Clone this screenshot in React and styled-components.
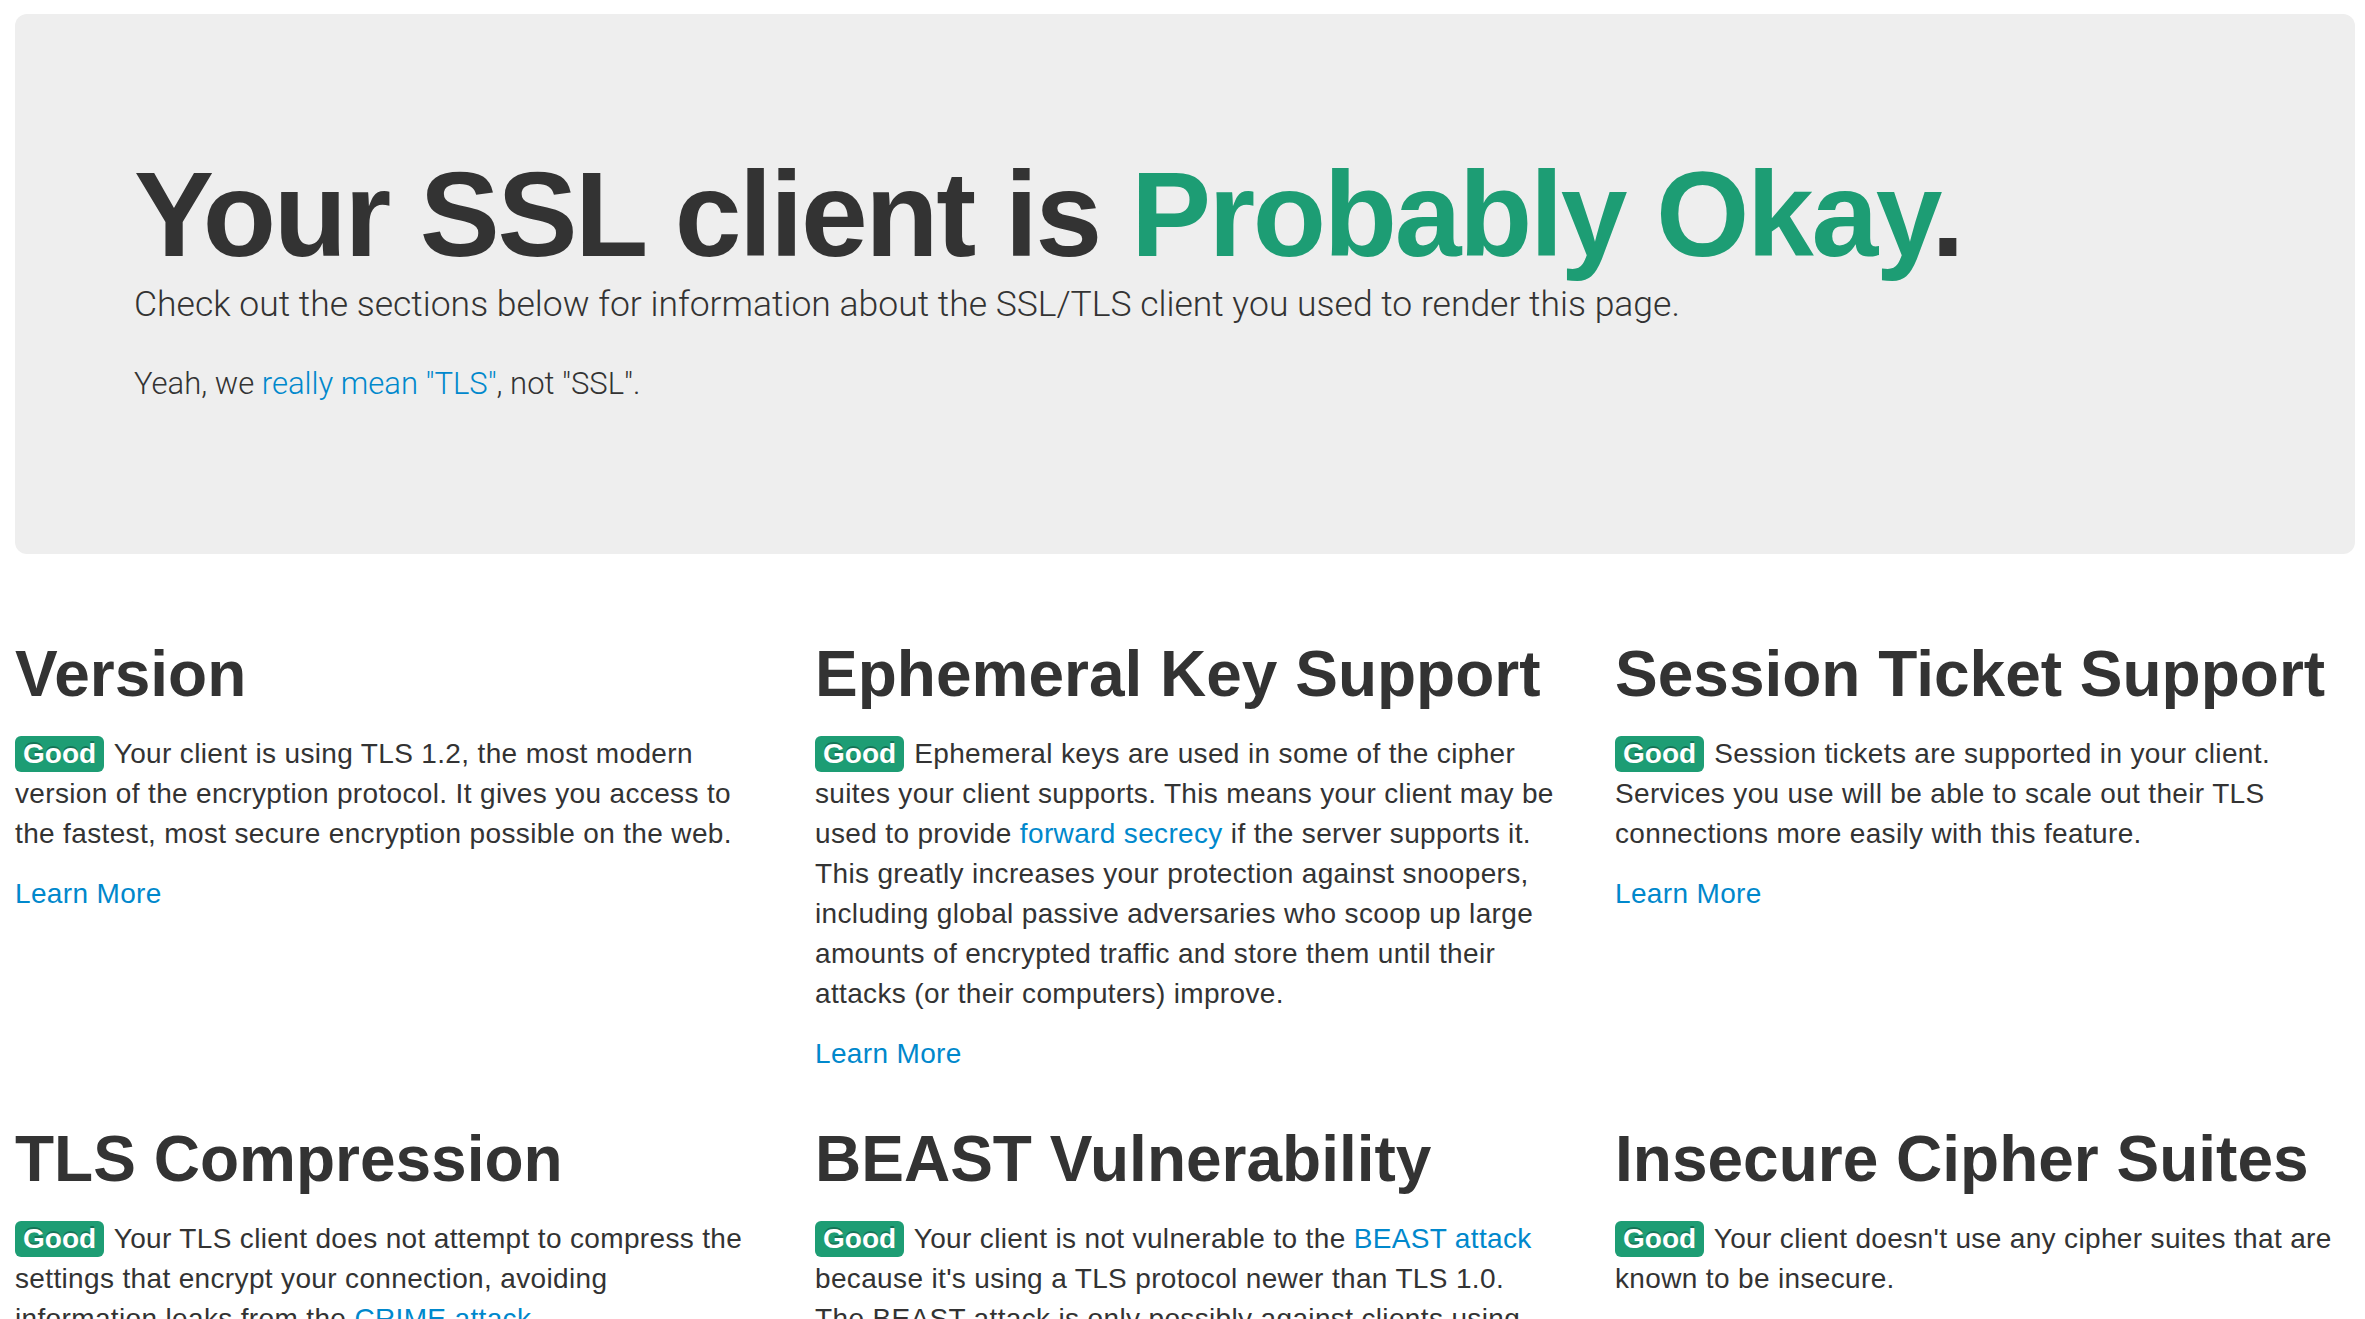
import React from 'react';
import styled, { createGlobalStyle } from 'styled-components';

const GlobalStyle = createGlobalStyle`
  html, body {
    margin: 0;
    padding: 0;
    background: #fff;
  }

  body {
    font-family: "Liberation Sans", Arial, sans-serif;
    font-size: 28px;
    line-height: 40px;
    letter-spacing: 0.35px;
    color: #333;
  }
`;

const Page = styled.div`
  padding: 14px 10px 0 15px;
`;

const Hero = styled.header`
  background-color: #eee;
  border-radius: 12px;
  padding: 120px 119px;
  margin-bottom: 60px;
`;

const Title = styled.h1`
  margin: 20px 0 0;
  font-size: 120px;
  line-height: 1;
  font-weight: bold;
  letter-spacing: -2.4px;
  color: #333;
`;

const Verdict = styled.span`
  color: #1d9d74;
`;

const Lead = styled.p`
  margin: 0 0 20px;
  font-family: Roboto, "Liberation Sans", sans-serif;
  font-weight: 300;
  font-size: ${props => props.small ? '31px' : '35.5px'};
  line-height: 60px;
  letter-spacing: 0;
  color: #333;
`;

const Link = styled.a`
  color: #0088cc;
  text-decoration: none;
`;

const Sections = styled.main`
  display: grid;
  grid-template-columns: repeat(3, 1fr);
  column-gap: 60px;
  row-gap: 5px;
`;

const Section = styled.section`
  min-width: 0;
`;

const SectionTitle = styled.h2`
  margin: 20px 0;
  font-size: 64px;
  line-height: 80px;
  font-weight: bold;
  letter-spacing: 0;
  color: #333;
`;

const Text = styled.p`
  margin: 0 0 20px;
`;

const Rating = styled.span`
  display: inline-block;
  padding: 4px 8px;
  margin-right: 2px;
  font-size: 28px;
  line-height: 28px;
  font-weight: bold;
  letter-spacing: 0;
  color: #fff;
  background-color: #1d9d74;
  border-radius: 6px;
  text-shadow: 0 -2px 0 rgba(0, 0, 0, 0.25);
  vertical-align: baseline;
`;

const sections = [
  {
    title: 'Version',
    body: <>Your client is using TLS 1.2, the most modern version of the encryption protocol. It gives you access to the fastest, most secure encryption possible on the web.</>,
  },
  {
    title: 'Ephemeral Key Support',
    body: <>Ephemeral keys are used in some of the cipher suites your client supports. This means your client may be used to provide <Link href="#">forward secrecy</Link> if the server supports it. This greatly increases your protection against snoopers, including global passive adversaries who scoop up large amounts of encrypted traffic and store them until their attacks (or their computers) improve.</>,
  },
  {
    title: 'Session Ticket Support',
    body: <>Session tickets are supported in your client. Services you use will be able to scale out their TLS connections more easily with this feature.</>,
  },
  {
    title: 'TLS Compression',
    body: <>Your TLS client does not attempt to compress the settings that encrypt your connection, avoiding information leaks from the <Link href="#">CRIME attack</Link>.</>,
  },
  {
    title: 'BEAST Vulnerability',
    body: <>Your client is not vulnerable to the <Link href="#">BEAST attack</Link> because it's using a TLS protocol newer than TLS 1.0. The BEAST attack is only possibly against clients using TLS 1.0 or earlier versions of TLS or SSL.</>,
  },
  {
    title: 'Insecure Cipher Suites',
    body: <>Your client doesn't use any cipher suites that are known to be insecure.</>,
  },
];

const App = () => (
  <Page>
    <GlobalStyle />
    <Hero>
      <Title>Your SSL client is <Verdict>Probably Okay</Verdict>.</Title>
      <Lead>Check out the sections below for information about the SSL/TLS client you used to render this page.</Lead>
      <Lead small>Yeah, we <Link href="#">really mean "TLS"</Link>, not "SSL".</Lead>
    </Hero>

    <Sections>
      {sections.map((section, i) => (
        <Section key={i}>
          <SectionTitle>{section.title}</SectionTitle>
          <Text><Rating>Good</Rating> {section.body}</Text>
          <Text><Link href="#">Learn More</Link></Text>
        </Section>
      ))}
    </Sections>
  </Page>
);

export default App;
